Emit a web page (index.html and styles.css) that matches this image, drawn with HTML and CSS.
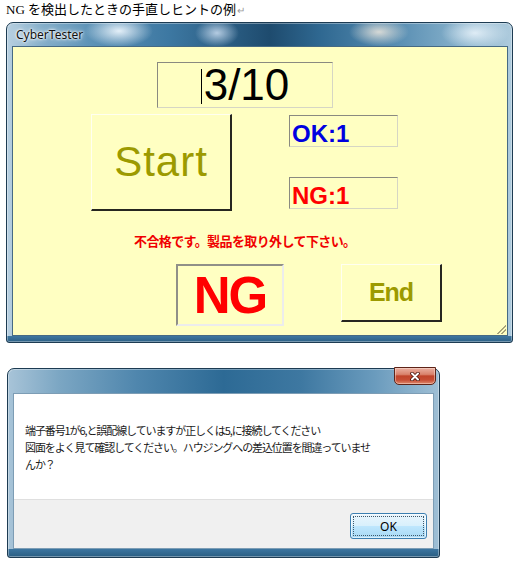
FILE: index.html
```html
<!DOCTYPE html>
<html lang="ja">
<head>
  <meta charset="UTF-8">
  <meta name="viewport" content="width=device-width, initial-scale=1.0">
  <link rel="stylesheet" href="styles.css">
  <title>CyberTester</title>
</head>
<body>

  <p class="caption">NG を検出したときの手直しヒントの例<span class="return-mark">↵</span></p>

  <div class="window main-window">
    <div class="titlebar">
      <span class="title">CyberTester</span>
    </div>
    <div class="client">
      <div class="counter-row">
        <div class="counter"><span class="caret"></span>3/10</div>
      </div>

      <div class="play-row">
        <div class="panel-button start-button">Start</div>
        <div class="results">
          <div class="result result-ok">OK:1</div>
          <div class="result result-ng">NG:1</div>
        </div>
      </div>

      <p class="message">不合格です。製品を取り外して下さい。</p>

      <div class="judge-row">
        <div class="judge">NG</div>
        <div class="panel-button end-button">End</div>
      </div>

      <!-- size grip -->
      <span class="grip"></span>
    </div>
  </div>

  <div class="window dialog">
    <div class="titlebar">
      <span class="close-button">
        <svg width="10" height="9" viewBox="0 0 10 9">
          <path d="M2 1.5 L8 7.5 M8 1.5 L2 7.5" stroke="#4a140a" stroke-width="3.6" stroke-linecap="round"/>
          <path d="M2 1.5 L8 7.5 M8 1.5 L2 7.5" stroke="#ffffff" stroke-width="2" stroke-linecap="round"/>
        </svg>
      </span>
    </div>
    <div class="dialog-client">
      <div class="dialog-body">
        <p>端子番号1が6,と誤配線していますが正しくは5,に接続してください<br>
        図面をよく見て確認してください。ハウジングへの差込位置を間違っていませ<br>
        んか？</p>
      </div>
      <div class="dialog-footer">
        <button class="ok-button">OK</button>
      </div>
    </div>
  </div>

</body>
</html>
```

FILE: styles.css
```css
* {
  box-sizing: border-box;
}

body {
  margin: 0;
  background-color: #ffffff;
  font-family: "Noto Sans CJK JP", sans-serif;
}

.caption {
  margin: 0;
  height: 22px;
  padding: 1px 0 0 6px;
  font-family: "Liberation Serif", "Noto Sans CJK JP", serif;
  font-size: 13px;
  line-height: 18px;
  color: #000;
}

.return-mark {
  color: #9a9a9a;
  font-size: 10px;
  margin-left: 1px;
}

/* Aero style window frame */
.window {
  border: 1px solid #1d3b52;
  border-radius: 7px 7px 3px 3px;
  box-shadow: inset 0 0 0 1px rgba(255, 255, 255, 0.35);
}

.main-window {
  margin-left: 6px;
  width: 507px;
  height: 321px;
  padding: 0 4px 6px 5px;
  background:
    linear-gradient(to top, #2c5f84 0, #3f77a0 6px, rgba(0, 0, 0, 0) 6px),
    radial-gradient(ellipse 34px 16px at 112px 8px, rgba(236, 245, 252, 0.95), rgba(236, 245, 252, 0)),
    radial-gradient(ellipse 22px 14px at 210px 10px, rgba(214, 230, 248, 0.8), rgba(214, 230, 248, 0)),
    radial-gradient(ellipse 30px 14px at 372px 9px, rgba(238, 232, 222, 0.85), rgba(238, 232, 222, 0)),
    radial-gradient(ellipse 34px 16px at 468px 10px, rgba(236, 245, 252, 0.85), rgba(236, 245, 252, 0)),
    linear-gradient(to right, #b8d0e1 0%, #85afca 7%, #5f94b8 16%, #3d78a2 32%, #1e4b6e 52%, #2f6891 62%, #5b90b4 78%, #8fb7cf 92%, #aecbdd 100%);
}

.titlebar {
  height: 23px;
  display: flex;
  align-items: center;
}

.title {
  padding: 0 0 1px 4px;
  font-family: "Noto Sans", sans-serif;
  font-size: 12px;
  color: #111;
  text-shadow: 0 0 6px #ffffff, 0 0 3px #ffffff, 0 0 2px #ffffff;
}

.client {
  position: relative;
  height: 290px;
  background-color: #ffffc2;
  border: 1px solid #466a84;
  font-family: "Liberation Sans", sans-serif;
}

.counter-row {
  display: flex;
  padding: 15px 0 0 144px;
}

.counter {
  width: 176px;
  height: 46px;
  border: 1px solid;
  border-color: #8a8a80 #d6d6c4 #d6d6c4 #8a8a80;
  text-align: center;
  font-size: 44px;
  line-height: 43px;
  color: #000;
}

.caret {
  display: inline-block;
  width: 1px;
  height: 35px;
  margin-right: 2px;
  vertical-align: -4px;
  background-color: #000;
}

.play-row {
  display: flex;
  align-items: flex-start;
  gap: 57px;
  padding: 6px 0 0 78px;
}

.panel-button {
  display: flex;
  align-items: center;
  justify-content: center;
  border-top: 1px solid #fffff0;
  border-left: 1px solid #fffff0;
  border-right: 2px solid #262620;
  border-bottom: 2px solid #262620;
  color: #9c9a00;
}

.start-button {
  width: 141px;
  height: 97px;
  font-size: 42px;
  letter-spacing: 1px;
}

.results {
  display: flex;
  flex-direction: column;
  gap: 30px;
  width: 109px;
  padding-top: 1px;
}

.result {
  height: 32px;
  padding-left: 2px;
  border: 1px solid;
  border-color: #8a8a80 #d6d6c4 #d6d6c4 #8a8a80;
  font-size: 24px;
  font-weight: bold;
  line-height: 36px;
}

.result-ok {
  color: #0000e0;
}

.result-ng {
  color: #ff0000;
}

.message {
  margin: 22px 0 0 121px;
  font-family: "Noto Sans CJK JP", sans-serif;
  font-size: 13px;
  font-weight: bold;
  line-height: 16px;
  letter-spacing: -0.6px;
  color: #f00000;
}

.judge-row {
  display: flex;
  align-items: flex-start;
  gap: 57px;
  padding: 15px 0 0 163px;
}

.judge {
  width: 108px;
  height: 62px;
  display: flex;
  align-items: center;
  justify-content: center;
  border: 2px solid;
  border-color: #909088 #ececec #ececec #909088;
  font-size: 51px;
  font-weight: bold;
  letter-spacing: -2px;
  color: #ff0000;
}

.end-button {
  width: 101px;
  height: 58px;
  font-size: 25px;
  font-weight: bold;
  letter-spacing: -1px;
}

.grip {
  position: absolute;
  right: 1px;
  bottom: 1px;
  width: 11px;
  height: 11px;
  background: repeating-linear-gradient(135deg, #a8a47a 0, #a8a47a 1px, rgba(0, 0, 0, 0) 1px, rgba(0, 0, 0, 0) 3px);
  clip-path: polygon(100% 0, 100% 100%, 0 100%);
}

/* message box */
.dialog {
  margin: 25px 0 0 7px;
  width: 433px;
  height: 190px;
  padding: 0 5px 8px 5px;
  background:
    linear-gradient(to top, #2a5e82 0, #3c75a0 8px, rgba(0, 0, 0, 0) 8px),
    radial-gradient(ellipse 30px 6px at 40px 186px, rgba(200, 222, 240, 0.9), rgba(200, 222, 240, 0)),
    radial-gradient(ellipse 40px 6px at 385px 186px, rgba(200, 222, 240, 0.9), rgba(200, 222, 240, 0)),
    linear-gradient(to right, #a8c4d8 0%, #7ba6c3 12%, #4f86ad 30%, #2d6a95 50%, #3e78a1 68%, #6a9bbd 85%, #9fbfd5 100%);
}

.dialog .titlebar {
  height: 24px;
  align-items: flex-start;
}

.close-button {
  display: flex;
  align-items: center;
  justify-content: center;
  width: 42px;
  height: 18px;
  margin: -2px -2px 0 auto;
  border: 1px solid #5e2418;
  border-radius: 0 0 5px 5px;
  background: linear-gradient(#eab0a2 0%, #d9826c 40%, #c0432a 50%, #c64d34 75%, #df8a6e 100%);
  box-shadow: inset 0 0 0 1px rgba(255, 230, 220, 0.45);
}

.dialog-client {
  border: 1px solid #7d9db5;
}

.dialog-body {
  height: 105px;
  padding: 28px 0 0 11px;
  background-color: #ffffff;
}

.dialog-body p {
  margin: 0;
  font-size: 11px;
  line-height: 17px;
  letter-spacing: -1.1px;
  color: #1a1a1a;
  white-space: nowrap;
}

.dialog-footer {
  height: 49px;
  display: flex;
  justify-content: flex-end;
  align-items: flex-start;
  padding: 13px 6px 0 0;
  border-top: 1px solid #dfdfdf;
  background-color: #f0f0f0;
}

.ok-button {
  width: 77px;
  height: 26px;
  border: 1px solid #3c7fb1;
  border-radius: 3px;
  background: linear-gradient(#eaf6fd 0%, #d9f0fc 48%, #bee6fd 52%, #a7d9f5 100%);
  box-shadow: inset 0 0 0 1px rgba(255, 255, 255, 0.6);
  outline: 1px dotted #40586a;
  outline-offset: -4px;
  font-family: "Noto Sans", sans-serif;
  font-size: 12px;
  color: #000;
  padding: 0;
}
```
